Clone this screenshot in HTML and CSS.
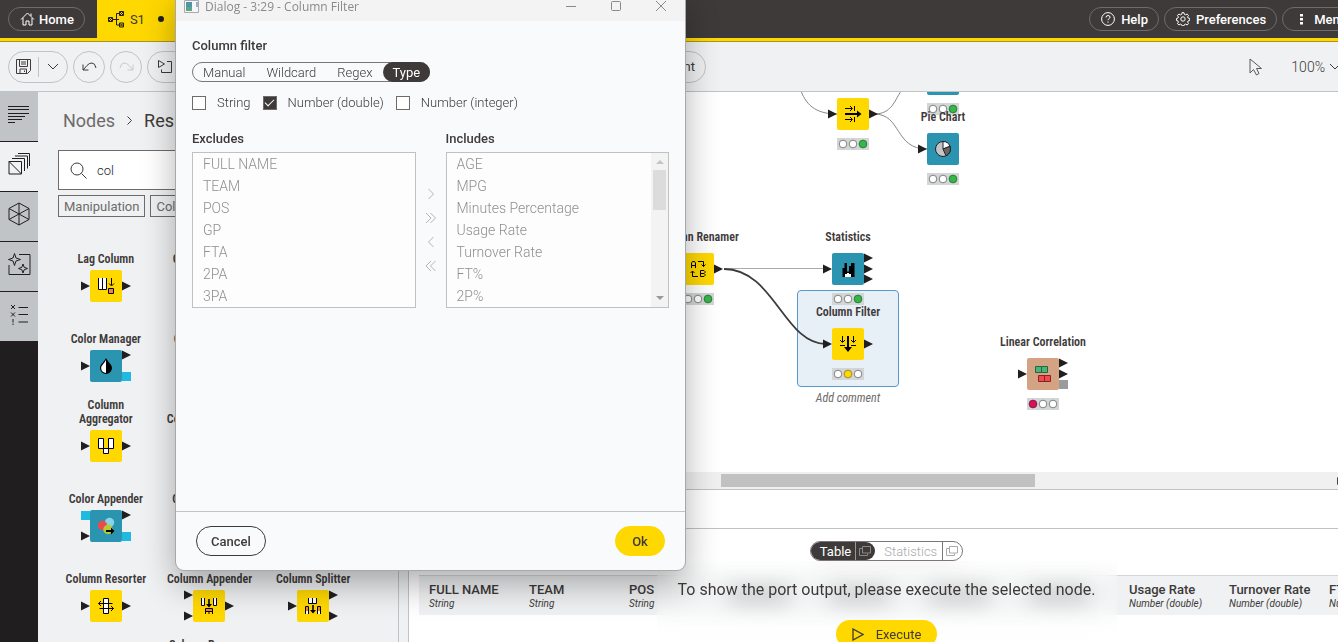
FILE: index.html
```html
<!DOCTYPE html>
<html lang="en">
<head>
<meta charset="utf-8">
<title>S1 – Workflow editor</title>
<link rel="stylesheet" href="styles.css">
</head>
<body>
<svg class="defs" aria-hidden="true">
  <symbol id="port" viewBox="0 0 9 10"><path d="M0 .5 9 5 0 9.500z" fill="#201e1f"/></symbol>
  <symbol id="lights" viewBox="0 0 32 12"><path d="M0 0h32v12H0z" fill="#d3d6d6"/><g fill="#fff" stroke="#666" stroke-width=".8"><circle cx="6" cy="6" r="3.800"/><circle cx="16" cy="6" r="3.800"/><circle cx="26" cy="6" r="3.800"/></g></symbol>
</svg>
<div class="app">
  <header class="topbar">
    <button class="pill home"><svg width="15" height="14" viewBox="0 0 15 14" fill="none" stroke="#fff"><path d="M1 7.500 7.500 1 14 7.500M3 6v7h3V9h3v4h3V6M11 4V1.500"/></svg>Home</button>
    <a class="tab" href="#s1"><svg width="17" height="17" viewBox="0 0 17 17" fill="none" stroke="#201e1f"><path d="M.5 6.500h4v4h-4zM11.500.5h4v4h-4zM11.500 12h4v4h-4zM4.500 8.500H8M11 2.500H8.500v11.500H11M1 7l3 3M12 1l3 3M12 12.500l3 3M4 7 1 10M15 1l-3 3M15 12.500l-3 3M7 8.500h4"/></svg><span>S1</span><i class="dot"></i></a>
    <nav class="topnav">
      <button class="pill"><svg width="14" height="14" viewBox="0 0 14 14" fill="none" stroke="#fff"><circle cx="7" cy="7" r="6.400"/><path d="M5 5.500Q5 3.500 7 3.500T9 5.300C9 6.700 7 6.500 7 8.200M7 9.500v1.200"/></svg>Help</button>
      <button class="pill"><svg width="14" height="14" viewBox="0 0 14 14" fill="none" stroke="#fff"><path d="M6 .7h2l.4 1.700 1.200.5 1.500-.9 1.400 1.400-.9 1.500.5 1.200 1.700.4v2l-1.700.4-.5 1.200.9 1.500-1.400 1.400-1.500-.9-1.200.5-.4 1.200H6l-.4-1.200-1.200-.5-1.500.9-1.400-1.400.9-1.500-.5-1.200L.5 8.500v-2l1.400-.4.5-1.200-.9-1.500L2.900 2l1.500.9 1.200-.5z"/><circle cx="7" cy="7" r="2.200"/></svg>Preferences</button>
      <button class="pill"><svg width="14" height="14" viewBox="0 0 14 14" fill="#fff"><path d="M6 2h3v2.500H6zM6 6h3v2.500H6zM6 10h3v2.500H6z"/></svg>Menu</button>
    </nav>
  </header>

  <div class="toolbar">
    <div class="tools">
      <div class="split">
        <button aria-label="Save"><svg width="15" height="15" viewBox="0 0 15 15" fill="none" stroke="#3e3a39"><path d="M.5.500h14v11l-3 3H.5zM3.500.5v7h8v-7M4 14.500V10h6.500v4.500M8.500 11.500v1.500M5 3h5M5 5h5"/></svg></button>
        <button aria-label="Save options"><svg width="12" height="7" viewBox="0 0 12 7" fill="none" stroke="#3e3a39"><path d="m1 1 5 5 5-5"/></svg></button>
      </div>
      <button class="round" aria-label="Undo"><svg width="15" height="11" viewBox="0 0 15 11" fill="none" stroke="#3e3a39"><path d="M1 3.500V9h5.500M1 9l4-4.500Q7 2 10 2t4 5"/></svg></button>
      <button class="round" aria-label="Redo" disabled><svg width="15" height="11" viewBox="0 0 15 11" fill="none" stroke="#c8cacb"><path d="M14 3.500V9H8.500M14 9l-4-4.500Q8 2 5 2T1 7"/></svg></button>
      <button class="wide" aria-label="Execute all"><svg width="15" height="14" viewBox="0 0 15 14" fill="none" stroke="#3e3a39"><path d="M.5.500v7L6.500 4zM9 1.500h4.500v11h-10v-3M9 1.500h1.500"/></svg></button>
      <button class="wide component">Create component</button>
    </div>
    <div class="view">
      <button aria-label="Selection mode"><svg width="14" height="18" viewBox="0 0 14 18" fill="none" stroke="#5d5a59"><path d="M1 1v14l3.500-3.500 3 5.500 2.500-1.500-2.500-5h5z"/></svg></button>
      <button class="zoom">100%<svg width="12" height="7" viewBox="0 0 12 7" fill="none" stroke="#3e3a39"><path d="m1 1 5 5 5-5"/></svg></button>
    </div>
  </div>

  <div class="work">
    <nav class="rail">
      <button aria-label="Description"><svg width="22" height="19" viewBox="0 0 22 19" fill="none" stroke="#201e1f"><path d="M0 1.500h21M0 4.500h21M0 8.500h21M0 11.500h17M0 14.500h14M0 17.500h7"/></svg></button>
      <button class="on" aria-label="Nodes"><svg width="22" height="22" viewBox="0 0 22 22" fill="none" stroke="#201e1f"><path d="M1 8.500h12.500V21H1zM1 8.500 13.500 21M4 5.500h12.500V18M7 3h12.500v12.500M10 .5h11.500V13"/></svg></button>
      <button aria-label="Spaces"><svg width="22" height="24" viewBox="0 0 22 24" fill="none" stroke="#201e1f"><path d="M11 1 21 6.500v11L11 23 1 17.500v-11zM1 6.500l20 11M21 6.500l-20 11M11 1v22"/></svg></button>
      <button aria-label="Assistant"><svg width="23" height="23" viewBox="0 0 23 23" fill="none" stroke="#201e1f"><path d="M11 1.500h11v20H1V12M6.500.5l1.500 4.500L12.500 6.500 8 8 6.500 12.500 5 8 .5 6.500 5 5zM15 11l1.200 3.300 3.300 1.200-3.300 1.200L15 20l-1.200-3.300L10.500 15.500l3.300-1.200z"/></svg></button>
      <button aria-label="Monitor"><svg width="18" height="21" viewBox="0 0 18 21" fill="none" stroke="#201e1f"><path d="m1 1 4 4M5 1 1 5M1 8.500l4 4M5 8.500l-4 4M3 15v3.500M3 19.500V21M8.500 3.500H18M8.500 10.500H18M8.500 18H18"/></svg></button>
    </nav>

    <aside class="panel">
      <div class="crumbs"><a href="#nodes">Nodes</a><svg width="5" height="9" viewBox="0 0 5 9" fill="none" stroke="#3e3a39"><path d="m.5.500 4 4-4 4"/></svg><b>Results</b></div>
      <label class="search"><svg width="17" height="17" viewBox="0 0 17 17" fill="none" stroke="#3e3a39"><circle cx="7" cy="7" r="6"/><path d="m11.500 11.500 5 5"/></svg><input type="text" value="col" aria-label="Search nodes"></label>
      <div class="tags"><button>Manipulation</button><button>Column</button></div>
      <div class="grid">
        <div class="item c1"><span>Lag Column</span><svg class="glyph" viewBox="0 0 50 32"><rect x="9" width="32" height="32" rx="2" fill="#ffd800"/><use href="#port" y="11" width="9" height="10"/><use href="#port" x="41" y="11" width="9" height="10"/><path d="M17.500 8v11.500h8V8" fill="#fff" stroke="#000"/><path d="M21.500 8v11" stroke="#000"/><path d="M30.500 8v7M28 13.500l2.500 2.500 2.500-2.500" fill="none" stroke="#000"/><path d="M27.500 18.500h5v5h-5z" fill="#f0883c" stroke="#000"/></svg></div>
        <div class="item c2"><span>Column Merger</span></div>
        <div class="item c1"><span>Color Manager</span><svg class="glyph" viewBox="0 0 50 32"><rect x="9" width="32" height="32" rx="2" fill="#2b95b1"/><use href="#port" y="11" width="9" height="10"/><use href="#port" x="41" width="9" height="10"/><path d="M41 22h9v9h-9z" fill="#20b9e0"/><path d="M25 8c2 4 6 6.500 6 10a6 6 0 0 1-12 0c0-3.500 4-6 6-10z"/><path d="M25 10v13a4.800 4.800 0 0 1-4.800-5c0-2.500 3.300-5 4.800-8z" fill="#fff"/></svg></div>
        <div class="item c2"><span>Color Extractor</span></div>
        <div class="item c1"><span>Column Aggregator</span><svg class="glyph" viewBox="0 0 50 32"><rect x="9" width="32" height="32" rx="2" fill="#ffd800"/><use href="#port" y="11" width="9" height="10"/><use href="#port" x="41" y="11" width="9" height="10"/><path d="M17.500 8.500h5v10h-5zM27.500 8.500h5v10h-5zM22.500 18.500h5v5h-5z" fill="#fff" stroke="#000"/></svg></div>
        <div class="item c2"><span>Column Combiner</span></div>
        <div class="item c1"><span>Color Appender</span><svg class="glyph" viewBox="0 0 50 32"><rect x="9" width="32" height="32" rx="2" fill="#2b95b1"/><path d="M0 1h9v9H0zM41 22h9v9h-9z" fill="#20b9e0"/><use href="#port" y="21" width="9" height="10"/><use href="#port" x="41" width="9" height="10"/><circle cx="28.500" cy="12.500" r="4.700" fill="#8bd3e6"/><circle cx="21.500" cy="15.500" r="4.700" fill="#e94b50"/><circle cx="27" cy="19.500" r="4.700" fill="#b8cc2e"/><path d="M25 20h5v-2.500l3.500 3.500-3.500 3.500V22h-5z"/></svg></div>
        <div class="item c2"><span>Column Splitter</span></div>
        <div class="item c1"><span>Column Resorter</span><svg class="glyph" viewBox="0 0 50 32"><rect x="9" width="32" height="32" rx="2" fill="#ffd800"/><use href="#port" y="11" width="9" height="10"/><use href="#port" x="41" y="11" width="9" height="10"/><path d="M22.500 8.500h5v15h-5zM22.500 13.500h5M22.500 18.500h5" fill="#fff" stroke="#000"/><path d="M17.500 13.500h14M20 11l-2.500 2.500L20 16M18.500 18.500h14M30 16l2.500 2.500L30 21" fill="none" stroke="#000"/></svg></div>
        <div class="item c2"><span>Column Appender</span><svg class="glyph" viewBox="0 0 50 32"><rect x="9" width="32" height="32" rx="2" fill="#ffd800"/><use href="#port" width="9" height="10"/><use href="#port" y="21" width="9" height="10"/><use href="#port" x="41" y="11" width="9" height="10"/><path d="M17.500 8v7.500h3V8M29.500 8v7.500h3V8M21.500 19v5M25 21v3M28.500 19v5" fill="#fff" stroke="#000"/><path d="M21.500 18.500h7v3h-7z" fill="#f0883c" stroke="#000"/><path d="M24.200 9h1.600v5H28l-3 3.500-3-3.500h2.200z"/></svg></div>
        <div class="item c3"><span>Column Splitter</span><svg class="glyph" viewBox="0 0 50 32"><rect x="9" width="32" height="32" rx="2" fill="#ffd800"/><use href="#port" y="11" width="9" height="10"/><use href="#port" x="41" width="9" height="10"/><use href="#port" x="41" y="21" width="9" height="10"/><path d="M20.500 8v5.500h8V8M24.500 8v5M17.500 24v-7.500h3V24M29.500 24v-7.500h3V24" fill="#fff" stroke="#000"/><path d="M18 17h2v4h-2zM30 17h2v4h-2z" fill="#f0883c"/><path d="M24.200 15h1.600v5H28l-3 3.500-3-3.500h2.200z"/></svg></div>
        <div class="item c2"><span>Column Renamer (Regex)</span></div>
      </div>
    </aside>

    <main class="main">
      <section class="canvas">
        <div class="selection"></div>
        <svg class="wires" width="929" height="380" viewBox="0 0 929 380" fill="none" stroke="#888"><path d="M391-4C396 12 406 22 428 22M465 22c18 0 20-13 29-26M465 22c28 0 20 35 53 35"/><path d="M315 176.500h100" stroke="#aaa"/><path d="M315 177c50 0 60 75 102 75" stroke="#3e3a39" stroke-width="1.800"/></svg>
        <div class="node n-top"><span></span><svg class="glyph" viewBox="0 0 50 32"><rect x="9" width="32" height="32" rx="2" fill="#2b95b1"/></svg><svg class="status" viewBox="0 0 32 12"><use href="#lights"/><circle cx="26" cy="6" r="3.800" fill="#38b54a" stroke="#16802a" stroke-width=".8"/></svg></div>
        <div class="node n-split"><span></span><svg class="glyph" viewBox="0 0 50 32"><rect x="9" width="32" height="32" rx="2" fill="#ffd800"/><use href="#port" y="11" width="9" height="10"/><use href="#port" x="41" y="11" width="9" height="10"/><path d="M17 10.500h7M22 8l2.500 2.500L22 13M26.500 8v5M17 21.500h7M22 19l2.500 2.500L22 24M26.500 19v5" fill="none" stroke="#000"/><path d="M17 15h12v-2.500l4.500 3.500-4.500 3.500V17H17z"/></svg><svg class="status" viewBox="0 0 32 12"><use href="#lights"/><circle cx="26" cy="6" r="3.800" fill="#38b54a" stroke="#16802a" stroke-width=".8"/></svg></div>
        <div class="node n-pie"><span>Pie Chart</span><svg class="glyph" viewBox="0 0 50 32"><rect x="9" width="32" height="32" rx="2" fill="#2b95b1"/><use href="#port" y="11" width="9" height="10"/><g stroke="#222"><circle cx="25" cy="16" r="7.500" fill="#c2c4c5"/><path d="M25 16V8.500a7.500 7.500 0 0 1 7 4.800z" fill="#fff"/><path d="m25 16 7-2.700a7.500 7.500 0 0 1-4 9.500z" fill="#666"/></g></svg><svg class="status" viewBox="0 0 32 12"><use href="#lights"/><circle cx="26" cy="6" r="3.800" fill="#38b54a" stroke="#16802a" stroke-width=".8"/></svg></div>
        <div class="node n-rename"><span>Column Renamer</span><svg class="glyph" viewBox="0 0 50 32"><rect x="9" width="32" height="32" rx="2" fill="#ffd800"/><use href="#port" y="11" width="9" height="10"/><use href="#port" x="41" y="11" width="9" height="10"/><path d="M18.500 15v-5l1-1.500h2l1 1.500v5M18.500 12.500h4M25 8.500h5.500v5M28.500 11.500l2 2 2-2M27.500 23.500v-6h3.500l1 1v1l-1 1h-3.500 3.500l1 1v1l-1 1zM25 23.500h-5.500v-5M17.500 20l2-2 2 2" fill="none" stroke="#000"/></svg><svg class="status" viewBox="0 0 32 12"><use href="#lights"/><circle cx="26" cy="6" r="3.800" fill="#38b54a" stroke="#16802a" stroke-width=".8"/></svg></div>
        <div class="node n-stats"><span>Statistics</span><svg class="glyph" viewBox="0 0 50 32"><rect x="9" width="32" height="32" rx="2" fill="#2b95b1"/><use href="#port" y="11" width="9" height="10"/><use href="#port" x="41" width="9" height="10"/><use href="#port" x="41" y="11" width="9" height="10"/><use href="#port" x="41" y="21" width="9" height="10"/><path d="M19.500 24v-9h2v-5H24v8.500h2V13h2v-3h3.500v14z"/><path d="M22 24v-3h2v-1h2v1h2v3z" fill="#fff"/></svg><svg class="status" viewBox="0 0 32 12"><use href="#lights"/><circle cx="26" cy="6" r="3.800" fill="#38b54a" stroke="#16802a" stroke-width=".8"/></svg></div>
        <div class="node n-filter"><span>Column Filter</span><svg class="glyph" viewBox="0 0 50 32"><rect x="9" width="32" height="32" rx="2" fill="#ffd800"/><use href="#port" y="11" width="9" height="10"/><use href="#port" x="41" y="11" width="9" height="10"/><path d="M19.500 8v6M17 12l2.500 2.500L22 12M17 17.500h5M30.500 8v6M28 12l2.500 2.500L33 12M28 17.500h5" fill="none" stroke="#000"/><path d="M24 8h2v11h3l-4 5-4-5h3z"/></svg><svg class="status" viewBox="0 0 32 12"><use href="#lights"/><circle cx="16" cy="6" r="3.800" fill="#ffd800" stroke="#a08a10" stroke-width=".8"/></svg><em>Add comment</em></div>
        <div class="node n-corr"><span>Linear Correlation</span><svg class="glyph" viewBox="0 0 50 32"><rect x="9" width="32" height="32" rx="2" fill="#d4a384"/><use href="#port" y="11" width="9" height="10"/><use href="#port" x="41" width="9" height="10"/><use href="#port" x="41" y="11" width="9" height="10"/><path d="M41 22h9v9h-9z" fill="#9b9b9b"/><path d="M17.500 8.500h6v6h-6zM23.500 8.500h6v6h-6z" fill="#4cb277" stroke="#22683f"/><path d="M20.500 17.500h6v6h-6zM26.500 17.500h6v6h-6z" fill="#ee4b50" stroke="#8c1f24"/></svg><svg class="status" viewBox="0 0 32 12"><use href="#lights"/><circle cx="6" cy="6" r="3.800" fill="#d8105a" stroke="#8e0b3b" stroke-width=".8"/></svg></div>
      </section>
      <div class="hscroll"><div class="thumb"></div><svg class="end" width="5" height="8" viewBox="0 0 5 8"><path d="M0 0 5 4 0 8z" fill="#444"/></svg></div>
      <div class="ports"></div>
      <section class="output">
        <div class="switch">
          <button class="on">Table</button><button class="on pop" aria-label="Open table"><svg width="12" height="10" viewBox="0 0 12 10" fill="none" stroke="#8b8887"><path d="M3.500.5h8v6.500h-8zM3 2.500H.5v7h8V7.500"/></svg></button>
          <button>Statistics</button><button class="pop last" aria-label="Open statistics"><svg width="12" height="10" viewBox="0 0 12 10" fill="none" stroke="#aaa"><path d="M3.500.5h8v6.500h-8zM3 2.500H.5v7h8V7.500"/></svg></button>
        </div>
        <table class="data"><thead><tr>
          <th>FULL NAME<small>String</small></th><th>TEAM<small>String</small></th><th>POS<small>String</small></th><td></td><td></td><td></td><td></td><th>Usage Rate<small>Number (double)</small></th><th>Turnover Rate<small>Number (double)</small></th><th>FT%<small>Number (double)</small></th>
        </tr></thead></table>
        <div class="message"><p>To show the port output, please execute the selected node.</p><button><svg width="12" height="13" viewBox="0 0 12 13" fill="none" stroke="#3e3a39" stroke-width="1.300"><path d="M1 1v11l10-5.500z"/></svg>Execute</button></div>
      </section>
    </main>
  </div>
</div>

<div class="dialog" role="dialog" aria-label="Column Filter">
  <div class="title"><svg width="15" height="13" viewBox="0 0 15 13"><path d="M.5.500h14v12H.5z" fill="#f4f6f8" stroke="#aaa"/><path d="M2 2h6v9H2z" fill="#4f93ac"/><path d="M2 7h6v4H2z" fill="#5aa883"/><path d="M12 2h2v5h-2z" fill="#8fb4dc"/></svg><span>Dialog - 3:29 - Column Filter</span>
    <button aria-label="Minimize"><svg width="12" height="12" viewBox="0 0 12 12" fill="none" stroke="#8a8a8a"><path d="M1 6.500h10"/></svg></button><button aria-label="Maximize"><svg width="12" height="12" viewBox="0 0 12 12" fill="none" stroke="#8a8a8a"><rect x="1.500" y="1.500" width="9" height="9" rx="1"/></svg></button><button aria-label="Close"><svg width="12" height="12" viewBox="0 0 12 12" fill="none" stroke="#8a8a8a"><path d="m1 1 10 10M11 1 1 11"/></svg></button>
  </div>
  <div class="content">
    <h2>Column filter</h2>
    <div class="modes"><button>Manual</button><button>Wildcard</button><button>Regex</button><button class="on">Type</button></div>
    <div class="types">
      <label><input type="checkbox">String</label>
      <label><input type="checkbox" checked>Number (double)</label>
      <label><input type="checkbox">Number (integer)</label>
    </div>
    <div class="twin">
      <div class="side"><h3>Excludes</h3><ul><li>FULL NAME</li><li>TEAM</li><li>POS</li><li>GP</li><li>FTA</li><li>2PA</li><li>3PA</li></ul></div>
      <div class="moves">
        <button aria-label="Include selected"><svg width="12" height="12" viewBox="0 0 12 12"><path d="m3.500 1 5 5-5 5"/></svg></button>
        <button aria-label="Include all"><svg width="12" height="12" viewBox="0 0 12 12"><path d="m1 1 5 5-5 5M5.500 1l5 5-5 5"/></svg></button>
        <button aria-label="Exclude selected"><svg width="12" height="12" viewBox="0 0 12 12"><path d="m8.500 1-5 5 5 5"/></svg></button>
        <button aria-label="Exclude all"><svg width="12" height="12" viewBox="0 0 12 12"><path d="m6 1-5 5 5 5M10.500 1l-5 5 5 5"/></svg></button>
      </div>
      <div class="side"><h3>Includes</h3><div class="scroller"><ul><li>AGE</li><li>MPG</li><li>Minutes Percentage</li><li>Usage Rate</li><li>Turnover Rate</li><li>FT%</li><li>2P%</li></ul><div class="vscroll"><svg width="8" height="4" viewBox="0 0 8 4"><path d="M0 4h8L4 0z" fill="#c4c4c4"/></svg><i></i><svg width="8" height="4" viewBox="0 0 8 4"><path d="M0 0h8L4 4z" fill="#999"/></svg></div></div></div>
    </div>
  </div>
  <div class="actions"><button>Cancel</button><button class="ok">Ok</button></div>
</div>
</body>
</html>
```

FILE: styles.css
```css
* { box-sizing: border-box; }
body { margin: 0; height: 100vh; overflow: hidden; position: relative; font-family: Roboto, "Liberation Sans", sans-serif; font-size: 13px; color: #3e3a39; }
button { font: inherit; color: inherit; background: none; border: 0; padding: 0; margin: 0; display: flex; align-items: center; justify-content: center; }
a { color: inherit; text-decoration: none; }
svg { display: block; flex: none; }
h2, h3, p, ul { margin: 0; padding: 0; list-style: none; }
.defs { position: absolute; width: 0; height: 0; }

.app { display: flex; flex-direction: column; height: 100%; margin-right: -26px; }
.topbar { display: flex; align-items: center; flex: none; height: 41px; background: #3e3a39; border-bottom: 3px solid #ffd800; padding: 0 2px 0 8px; }
.pill { height: 24px; padding: 0 10px 0 11px; gap: 6px; border: 1px solid #6e6b6a; border-radius: 12px; color: #fff; font-weight: 500; }
.pill:last-child { padding-right: 14px; }
.home { gap: 4px; }
.tab { display: flex; align-items: center; align-self: stretch; width: 200px; margin-left: 12px; padding-left: 11px; gap: 5px; background: #ffd800; }
.dot { width: 6px; height: 6px; border-radius: 3px; background: #201e1f; margin-left: 8px; }
.topnav { display: flex; gap: 5px; margin-left: auto; }

.toolbar { display: flex; align-items: center; justify-content: space-between; flex: none; height: 51px; padding: 0 23px 0 8px; background: #eff1f2; border-top: 1px solid #a8932a; border-bottom: 1px solid #c1c4c6; }
.tools { display: flex; gap: 5px; width: 698px; }
.split, .round, .wide { height: 32px; border: 1px solid #c1c4c6; border-radius: 16px; }
.split { display: flex; width: 60px; align-items: center; }
.split button { width: 29px; height: 20px; }
.split button + button { border-left: 1px solid #c1c4c6; }
.round { width: 32px; }
.wide { width: 60px; justify-content: flex-start; padding: 0 10px; }
.component { width: 150px; margin-left: auto; justify-content: flex-end; }
.view { display: flex; align-items: center; gap: 28px; }
.zoom { font-size: 14px; font-weight: 300; gap: 4px; }

.work { display: flex; flex: 1; min-height: 0; }
.rail { width: 38px; flex: none; background: #201e1f; }
.rail button { width: 38px; height: 50px; padding-bottom: 5px; background: #c1c4c6; border-bottom: 1px solid #201e1f; }
.rail .on { background: #eff1f2; }
.panel { width: 371px; flex: none; padding: 15px 43px 0 16px; background: #eff1f2; border-right: 1px solid #c1c4c6; overflow: hidden; box-shadow: inset -10px 0 0 -1px #eff1f2, inset -10px 0 0 #c1c4c6; }
.crumbs { display: flex; align-items: center; gap: 12px; height: 26px; padding-left: 9px; font-size: 18px; color: #6e6b6a; }
.crumbs b { font-weight: 400; color: #3e3a39; }
.search { display: flex; align-items: center; gap: 10px; height: 40px; margin: 17px 0 0 4px; padding-left: 11px; background: #fff; border: 1px solid #6e6b6a; }
.search input { border: 0; outline: 0; padding: 0; font: inherit; font-weight: 300; color: #201e1f; background: none; width: 200px; }
.tags { display: flex; gap: 5px; margin: 5px 0 0 4px; }
.tags button { height: 22px; padding: 0 5px; border: 1px solid #6e6b6a; color: #6e6b6a; font-size: 13px; }
.grid { display: grid; grid-template-columns: repeat(3, 1fr); grid-auto-rows: 80px; margin-top: 21px; }
.c1 { grid-column: 1; } .c2 { grid-column: 2; } .c3 { grid-column: 3; }
.item { display: flex; flex-direction: column; align-items: center; gap: 4px; }
.item span, .node span, .node em { font-family: "Roboto Condensed", "Liberation Sans Narrow", Roboto, sans-serif; font-size: 12px; line-height: 14px; font-weight: 600; text-align: center; }
.item span { display: flex; align-items: flex-end; justify-content: center; height: 28px; max-width: 90px; }
.glyph { width: 50px; height: 32px; }

.main { flex: 1; min-width: 0; display: flex; flex-direction: column; background: #fff; }
.canvas { position: relative; height: 380px; flex: none; overflow: hidden; }
.wires { position: absolute; left: 0; top: 0; }
.selection { position: absolute; left: 388px; top: 198px; width: 102px; height: 97px; background: #e8f0f7; border: 1px solid #5b97c8; border-radius: 4px; }
.node { position: absolute; width: 120px; margin-left: -60px; display: flex; flex-direction: column; align-items: center; }
.node span { height: 14px; margin-bottom: 9px; }
.node em { font-weight: 400; color: #6e6b6a; margin-top: 11px; }
.status { width: 32px; height: 12px; margin-top: 8px; }
.n-top { left: 534px; top: -52px; }
.n-split { left: 444px; top: -17px; }
.n-pie { left: 534px; top: 18px; }
.n-rename { left: 289px; top: 138px; }
.n-stats { left: 439px; top: 138px; }
.n-filter { left: 439px; top: 213px; }
.n-corr { left: 634px; top: 243px; }
.hscroll { display: flex; align-items: center; justify-content: space-between; height: 18px; flex: none; background: #f0f0f0; border-bottom: 1px solid #c1c1c1; padding: 0 22px 0 312px; }
.thumb { width: 314px; height: 13px; background: #c1c1c1; }
.ports { height: 39px; flex: none; border-bottom: 1px solid #c1c1c1; }
.output { position: relative; flex: 1; min-height: 0; padding-top: 12px; display: flex; flex-direction: column; align-items: center; overflow: hidden; }
.switch { display: flex; flex: none; height: 20px; border: 1px solid #7a7776; border-radius: 10px; overflow: hidden; }
.switch button { padding: 0 5px 0 9px; font-weight: 300; color: #aaa; }
.switch .on { padding-right: 4px; background: #3e3a39; color: #fff; font-weight: 400; }
.switch .pop { padding: 0 3px; border-left: 1px solid #7a7776; }
.switch .last { padding-right: 4px; }
.switch .on.pop { padding-right: 4px; border-color: #9a9897; border-radius: 0 10px 10px 0; }
.data { flex: none; align-self: flex-start; margin: 14px 0 0 10px; table-layout: fixed; width: 1000px; border-collapse: collapse; background: #eff1f2; border-top: 1px solid #d4d6d8; }
.data th { height: 39px; padding: 1px 0 0 10px; text-align: left; font-weight: 500; line-height: 15px; white-space: nowrap; }
.data td { padding: 0 30px 0 10px; }
.data td::before { content: ""; display: block; height: 20px; background: #c4c6c7; }
.data small { display: block; font-size: 10px; line-height: 13px; font-weight: 400; font-style: italic; }
.message { position: absolute; top: 32px; left: 50%; width: 460px; margin-left: -230px; height: 120px; padding-top: 19px; display: flex; flex-direction: column; align-items: center; gap: 20px; background: rgba(255,255,255,.2); backdrop-filter: blur(10px); }
.message p { font-size: 16px; line-height: 20px; white-space: nowrap; }
.message button { width: 101px; height: 28px; flex: none; border-radius: 14px; background: #ffd800; gap: 12px; }

.dialog { position: absolute; left: 176px; top: -9px; width: 509px; height: 579px; display: flex; flex-direction: column; background: #f9fafc; border-radius: 8px; overflow: hidden; box-shadow: 0 0 0 1px #a8a8a8, 0 14px 34px rgba(0,0,0,.32); }
.title { display: flex; align-items: center; flex: none; height: 30px; padding: 0 18px 0 8px; background: #f3f3f3; font: 12px "Open Sans", "Noto Sans", sans-serif; color: #8a8a8a; }
.title span { flex: 1; margin-left: 6px; }
.title button + button { margin-left: 33px; }
.content { flex: 1; padding: 17px 16px 16px; }
h2, h3 { font-size: 13px; line-height: 16px; font-weight: 500; }
.modes { display: flex; width: max-content; height: 20px; margin-top: 8px; border: 1px solid #7a7776; border-radius: 10px; }
.modes button { padding: 0 10px; font-weight: 300; }
.modes button + button { margin-left: 1px; }
.modes button.on { margin: -1px -1px -1px 0; height: 20px; border-radius: 10px; background: #3e3a39; color: #fff; font-weight: 400; }
.types { display: flex; gap: 12px; margin-top: 13px; font-weight: 300; }
.types label { display: flex; align-items: center; gap: 11px; line-height: 16px; }
.types input { appearance: none; width: 14px; height: 14px; margin: 0; border: 1px solid #6e6b6a; background: #fff; }
.types input:checked { background: #3e3a39; display: grid; place-items: center; }
.types input:checked::after { content: ""; width: 8px; height: 4px; border: solid #fff; border-width: 0 0 1px 1px; rotate: -45deg; margin-bottom: 3px; }
.twin { display: flex; margin-top: 20px; }
.side { flex: 1; }
.side ul, .scroller { border: 1px solid #c1c1c1; background: #fdfdfd; }
.side ul { margin-top: 5px; padding-left: 10px; color: #8f8f8f; font-size: 14px; line-height: 22px; font-weight: 300; }
.scroller { display: flex; margin-top: 5px; }
.side .scroller ul { flex: 1; margin: 0; border: 0; }
.vscroll { width: 17px; display: flex; flex-direction: column; align-items: center; padding: 7px 0; background: #f3f3f3; }
.vscroll i { width: 13px; height: 40px; margin: 6px 0 auto; background: #dcdcdc; }
.moves { width: 30px; padding-top: 57px; display: flex; flex-direction: column; align-items: center; gap: 12px; }
.moves svg { fill: none; stroke: #b5b5b5; }
.actions { display: flex; justify-content: space-between; align-items: center; height: 59px; flex: none; padding: 0 20px; border-top: 1px solid #c1c4c6; }
.actions button { height: 30px; width: 70px; border: 1px solid #3e3a39; border-radius: 15px; font-weight: 500; }
.actions .ok { width: 50px; border-color: #ffd800; background: #ffd800; }
```
